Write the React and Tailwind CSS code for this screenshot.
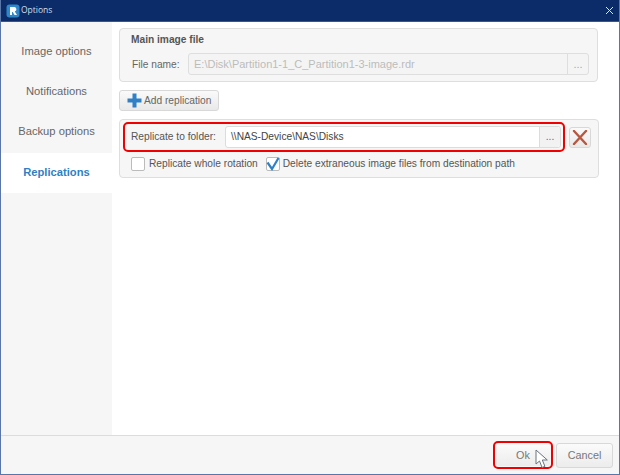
import React from 'react';

const tabs = ['Image options', 'Notifications', 'Backup options'];

function Logo() {
  return (
    <svg width="14" height="14" viewBox="0 0 14 14" className="ml-[6px] shrink-0">
      <rect x="0.5" y="0.5" width="13" height="13" rx="3" fill="#2f86c9" />
      <path d="M4 11V3h4.2a2.3 2.3 0 0 1 .6 4.5L11 11H8.6L6.7 7.9H6V11z" fill="#fff" />
    </svg>
  );
}

function Cursor() {
  return (
    <svg width="15" height="21" viewBox="0 0 15 21" className="absolute left-[534px] top-[449px]">
      <path d="M1 1v14l3.5-3 2.6 6.5 2.8-1.2-2.6-6.3h5z" fill="#fff" stroke="#6b7280" strokeWidth="1" strokeLinejoin="round" />
    </svg>
  );
}

export default function App() {
  return (
    <div className="relative flex h-[475px] w-[620px] flex-col overflow-hidden border-x border-b border-[#5a76a8] bg-white font-['Liberation_Sans',sans-serif] text-[10.2px] text-[#555]">
      <div className="-mx-px flex h-[22px] shrink-0 items-center gap-[1px] border-b border-[#2a5a9a] bg-[#0b2c68] text-[8.5px] text-[#d5dde9]">
        <Logo />
        <span className="font-['Open_Sans',sans-serif]">Options</span>
        <svg width="9" height="9" viewBox="0 0 9 9" className="ml-auto mr-[6px]">
          <path d="M1 1l7 7M8 1L1 8" stroke="#dfe5ef" strokeWidth="1" />
        </svg>
      </div>

      <div className="flex min-h-0 flex-1">
        <div className="flex w-[111px] shrink-0 flex-col bg-[#f6f6f6] pt-[9px] text-[11.2px] text-[#666]">
          {tabs.map((t) => (
            <div key={t} className="flex h-[40px] items-center justify-center">{t}</div>
          ))}
          <div className="mt-[2px] flex h-[40px] items-center justify-center bg-white pb-[1px] font-bold text-[#2f7fc4]">Replications</div>
        </div>

        <div className="flex flex-1 flex-col pl-[7px] pt-[6px]">
          <div className="h-[54px] w-[479px] rounded-[4px] border border-[#dedede] bg-[#f6f6f6] pl-[11px] pr-[8px] pt-[3px]">
            <div className="h-[15px] font-bold leading-[15px] text-[#555]">Main image file</div>
            <div className="mt-[6px] flex items-center">
              <span className="w-[57px] pl-[1px] pt-[1px] text-[#666]">File name:</span>
              <div className="flex h-[22px] flex-1 items-center rounded-[3px] border border-[#dedede] bg-[#f4f4f4] pl-[5px] text-[11px] text-[#bcbcbc]">
                <span className="flex-1">E:\Disk\Partition1-1_C_Partition1-3-image.rdr</span>
                <span className="flex h-full w-[21px] items-center justify-center border-l border-[#dedede] text-[#aaa]">...</span>
              </div>
            </div>
          </div>

          <button className="mt-[8px] flex h-[21px] w-[100px] items-center gap-[2px] whitespace-nowrap rounded-[3px] border border-[#d8d8d8] bg-gradient-to-b from-[#fafafa] to-[#e9e9e9] pl-[7px] text-[#666]">
            <svg width="15" height="15" viewBox="0 0 15 15" className="shrink-0">
              <path d="M5.5 0.5h4v5h5v4h-5v5h-4v-5h-5v-4h5z" fill="#2f80c6" />
            </svg>
            Add replication
          </button>

          <div className="mt-[8px] h-[59px] w-[480px] rounded-[4px] border border-[#dedede] bg-[#f6f6f6] pl-[3px] pt-[2px]">
            <div className="flex items-center gap-[4px]">
              <div className="flex h-[30px] w-[442px] items-center rounded-[5px] border-2 border-[#f00000] pl-[6px] pr-[2px]">
                <span className="w-[94px] shrink-0 text-[#555]">Replicate to folder:</span>
                <div className="flex h-[22px] flex-1 items-center rounded-[3px] border border-[#dcdcdc] bg-white pl-[5px] text-[#444]">
                  <span className="flex-1">\\NAS-Device\NAS\Disks</span>
                  <span className="flex h-full w-[21px] items-center justify-center rounded-r-[3px] border-l border-[#dcdcdc] bg-[#f2f2f2] text-[#666]">...</span>
                </div>
              </div>
              <button className="flex h-[21px] w-[22px] items-center justify-center rounded-[3px] border border-[#d8d8d8] bg-gradient-to-b from-[#fafafa] to-[#e9e9e9]">
                <svg width="16" height="15" viewBox="0 0 16 15">
                  <path d="M2 1l12 13M14 1L2 14" stroke="#b8573f" strokeWidth="2.4" strokeLinecap="round" />
                </svg>
              </button>
            </div>
            <div className="mt-[4px] flex items-center pl-[8px] text-[#555]">
              <span className="h-[14px] w-[14px] rounded-[2px] border border-[#bbb] bg-white" />
              <span className="ml-[4px]">Replicate whole rotation</span>
              <span className="relative ml-[8px] h-[14px] w-[14px] rounded-[2px] border border-[#bbb] bg-white">
                <svg width="14" height="14" viewBox="0 0 14 14" className="absolute -left-px -top-px">
                  <path d="M1.5 5.5l4.5 6.5 6.5-11" fill="none" stroke="#2f80c6" strokeWidth="2.2" />
                </svg>
              </span>
              <span className="ml-[3px]">Delete extraneous image files from destination path</span>
            </div>
          </div>
        </div>
      </div>

      <div className="flex h-[39px] shrink-0 items-center justify-end border-t border-[#dcdcdc] bg-[#f6f6f6] pr-[6px]">
        <div className="flex h-[28px] w-[60px] items-center justify-center rounded-[5px] border-2 border-[#f00000] p-[1px]">
          <button className="h-full w-full rounded-[3px] bg-gradient-to-b from-[#fbfbfb] to-[#ececec] text-[10.8px] text-[#777]">Ok</button>
        </div>
        <button className="ml-[3px] h-[25px] w-[57px] rounded-[3px] border border-[#d8d8d8] bg-gradient-to-b from-[#fbfbfb] to-[#ececec] text-[10.8px] text-[#777]">Cancel</button>
      </div>

      <Cursor />
    </div>
  );
}
